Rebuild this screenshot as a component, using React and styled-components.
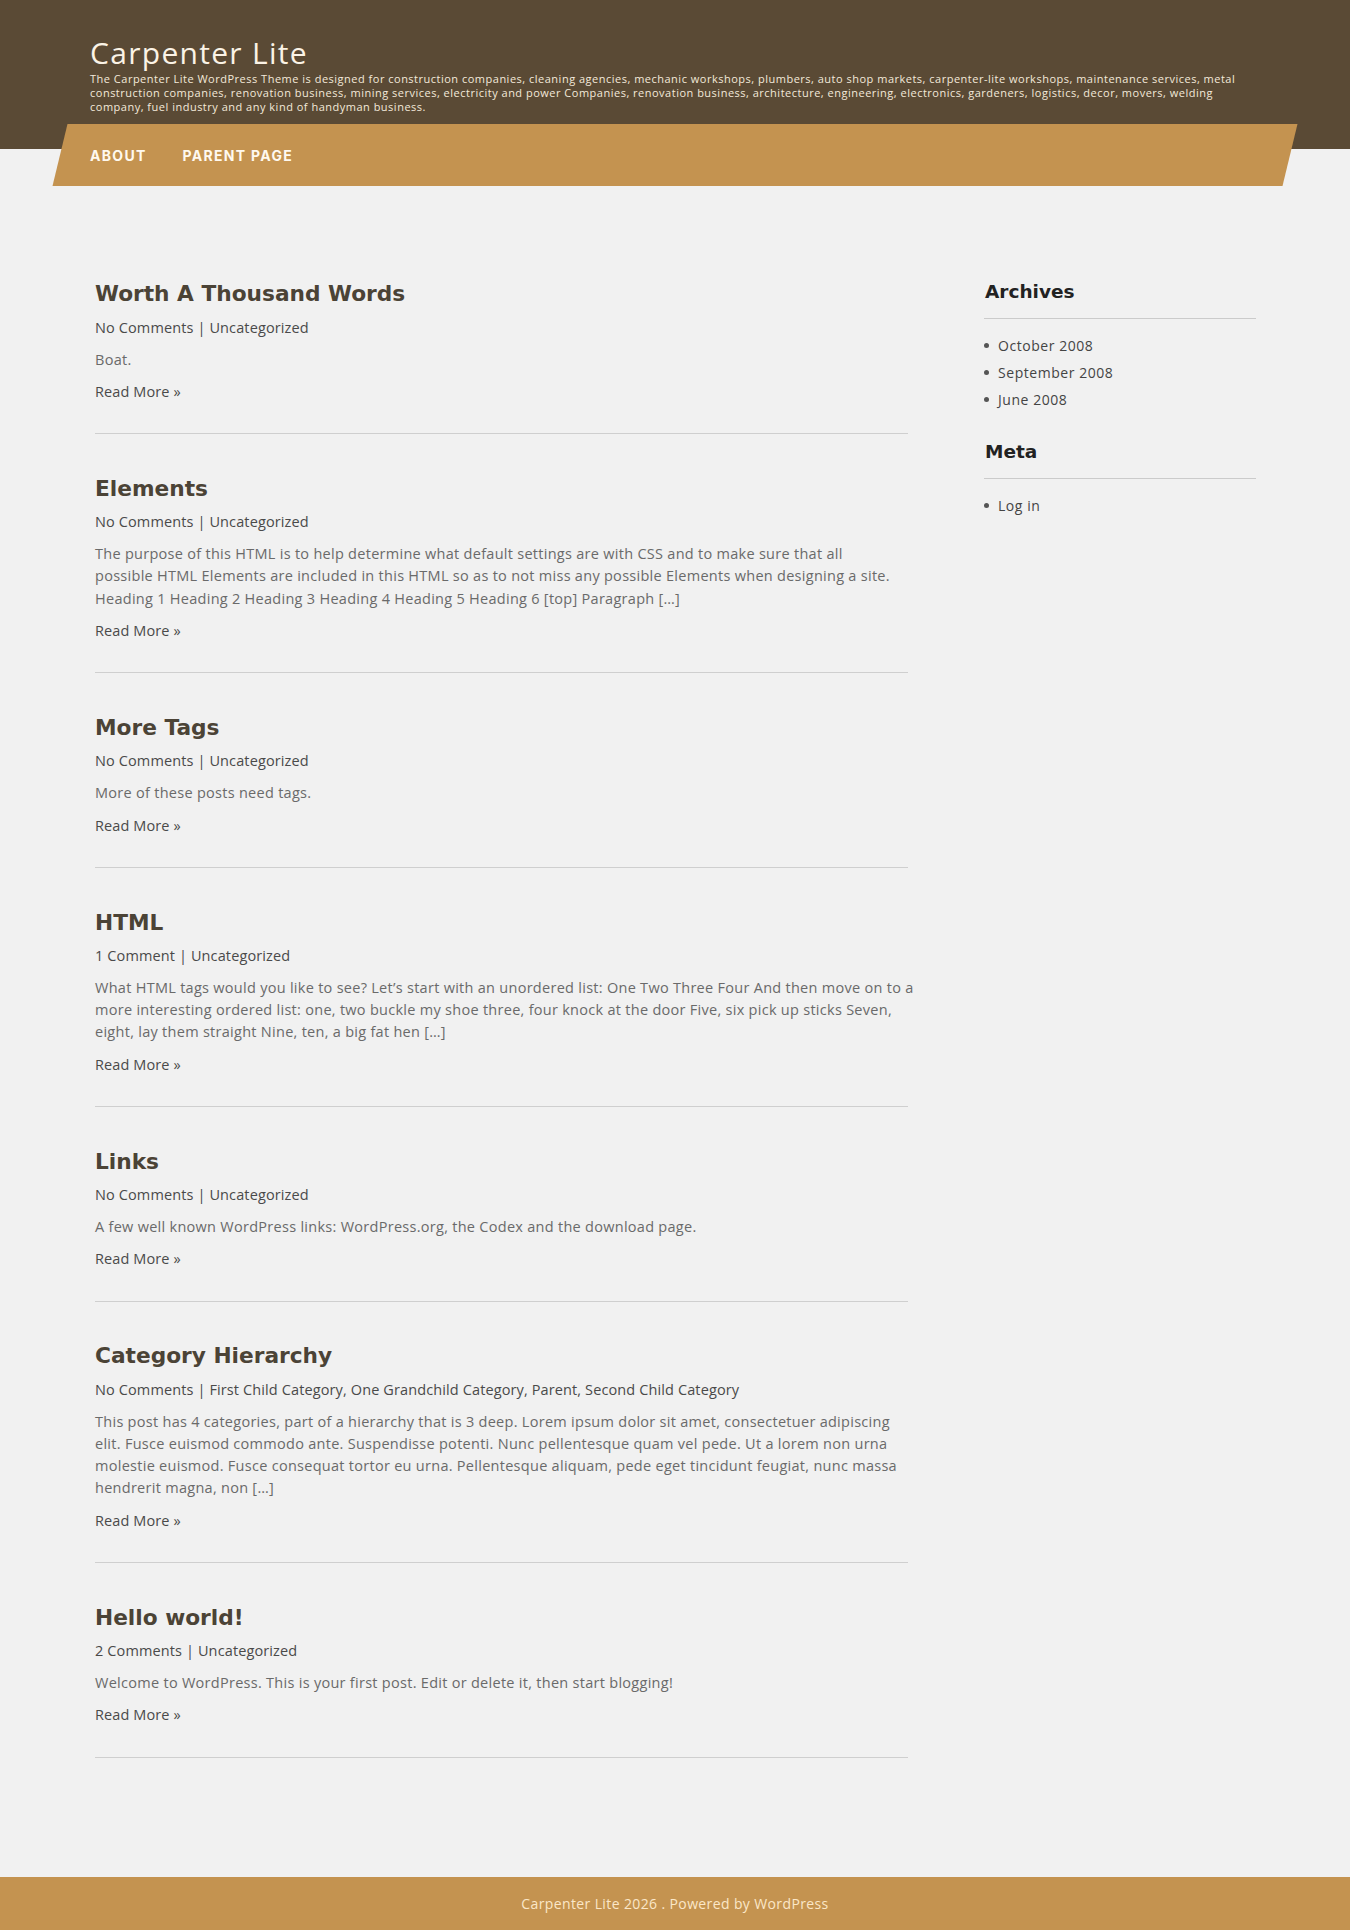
import React from "react";
import styled, { createGlobalStyle } from "styled-components";

const GlobalStyle = createGlobalStyle`
  html, body { margin: 0; padding: 0; }
  body {
    background: #f1f1f1;
    font-family: "Open Sans", "Liberation Sans", sans-serif;
    color: #4a4a4a;
  }
  * { box-sizing: border-box; }
  a { color: inherit; text-decoration: none; }
`;

const HeaderBand = styled.header`
  background: #5a4a35;
  height: 149px;
`;

const HeaderInner = styled.div`
  width: 1170px;
  margin: 0 auto;
  padding-top: 35px;
`;

const SiteTitle = styled.h1`
  margin: 0;
  font-family: "Open Sans", "Liberation Sans", sans-serif;
  font-weight: 400;
  font-size: 30px;
  line-height: 36px;
  letter-spacing: 1.3px;
  color: #fbf3e6;
`;

const Tagline = styled.p`
  margin: 0.5px 0 0;
  font-family: "Open Sans", "Liberation Sans", sans-serif;
  font-size: 11px;
  line-height: 14px;
  letter-spacing: 0.5px;
  color: #f3e9da;
  white-space: nowrap;
`;

const NavBar = styled.nav`
  position: relative;
  width: 1230px;
  height: 62px;
  margin: -25px auto 0;
  padding-left: 30px;
  display: flex;
  align-items: center;
  gap: 36px;
  &::before {
    content: "";
    position: absolute;
    inset: 0;
    background: #c49350;
    transform: skewX(-13.6deg);
    z-index: 0;
  }
`;

const NavLink = styled.a`
  position: relative;
  z-index: 1;
  font-family: "Inter", "Liberation Sans", sans-serif;
  font-weight: 700;
  font-size: 14px;
  letter-spacing: 1.3px;
  text-transform: uppercase;
  color: #fff9ef;
`;

const Content = styled.div`
  width: 1170px;
  margin: 0 auto;
  padding: 93px 4px 80px 5px;
  display: grid;
  grid-template-columns: 813px 272px;
  column-gap: 76px;
  align-items: start;
`;

const Main = styled.main``;

const Article = styled.article`
  padding-bottom: 30.5px;
  border-bottom: 1px solid #cfcfcf;
  margin-bottom: 39.5px;
`;

const PostTitle = styled.h2`
  margin: 0;
  font-family: "DejaVu Sans", "Liberation Sans", sans-serif;
  font-weight: 700;
  font-size: 21.7px;
  line-height: 29.5px;
  color: #4b4336;
`;

const Meta = styled.div`
  margin-top: 8px;
  font-size: 14.5px;
  line-height: 22px;
  letter-spacing: 0.12px;
  color: #4a4a4a;
`;

const Excerpt = styled.p`
  margin: 10px 0 0;
  font-size: 14.5px;
  line-height: 22.2px;
  letter-spacing: 0.28px;
  color: #6a6a6a;
  white-space: nowrap;
`;

const ReadMore = styled.a`
  display: block;
  margin-top: 10px;
  font-size: 14.5px;
  line-height: 22px;
  letter-spacing: 0.1px;
  color: #4a4a4a;
`;

const Sidebar = styled.aside``;

const Widget = styled.section`
  & + & { margin-top: 26px; }
`;

const WidgetTitle = styled.h3`
  margin: 0;
  padding: 0 0 13px 1px;
  border-bottom: 1px solid #cbcbcb;
  font-family: "DejaVu Sans", "Liberation Sans", sans-serif;
  font-weight: 700;
  font-size: 18.5px;
  line-height: 26px;
  color: #222;
`;

const WidgetList = styled.ul`
  list-style: none;
  margin: 13px 0 0;
  padding: 0;
`;

const WidgetItem = styled.li`
  display: flex;
  align-items: center;
  gap: 9px;
  font-size: 14px;
  line-height: 27px;
  letter-spacing: 0.55px;
  color: #444;
  &::before {
    content: "";
    width: 5px;
    height: 5px;
    border-radius: 50%;
    background: #555;
  }
`;

const Footer = styled.footer`
  height: 53px;
  background: #c49350;
  display: flex;
  align-items: center;
  justify-content: center;
  font-size: 14px;
  letter-spacing: 0.38px;
  color: #fbe7c8;
`;

const posts = [
  {
    title: "Worth A Thousand Words",
    meta: "No Comments | Uncategorized",
    lines: ["Boat."],
  },
  {
    title: "Elements",
    meta: "No Comments | Uncategorized",
    lines: [
      "The purpose of this HTML is to help determine what default settings are with CSS and to make sure that all",
      "possible HTML Elements are included in this HTML so as to not miss any possible Elements when designing a site.",
      "Heading 1 Heading 2 Heading 3 Heading 4 Heading 5 Heading 6 [top] Paragraph […]",
    ],
  },
  {
    title: "More Tags",
    meta: "No Comments | Uncategorized",
    lines: ["More of these posts need tags."],
  },
  {
    title: "HTML",
    meta: "1 Comment | Uncategorized",
    lines: [
      "What HTML tags would you like to see? Let’s start with an unordered list: One Two Three Four And then move on to a",
      "more interesting ordered list: one, two buckle my shoe three, four knock at the door Five, six pick up sticks Seven,",
      "eight, lay them straight Nine, ten, a big fat hen […]",
    ],
  },
  {
    title: "Links",
    meta: "No Comments | Uncategorized",
    lines: ["A few well known WordPress links: WordPress.org, the Codex and the download page."],
  },
  {
    title: "Category Hierarchy",
    meta: "No Comments | First Child Category, One Grandchild Category, Parent, Second Child Category",
    lines: [
      "This post has 4 categories, part of a hierarchy that is 3 deep. Lorem ipsum dolor sit amet, consectetuer adipiscing",
      "elit. Fusce euismod commodo ante. Suspendisse potenti. Nunc pellentesque quam vel pede. Ut a lorem non urna",
      "molestie euismod. Fusce consequat tortor eu urna. Pellentesque aliquam, pede eget tincidunt feugiat, nunc massa",
      "hendrerit magna, non […]",
    ],
  },
  {
    title: "Hello world!",
    meta: "2 Comments | Uncategorized",
    lines: ["Welcome to WordPress. This is your first post. Edit or delete it, then start blogging!"],
  },
];

export default function App() {
  return (
    <>
      <GlobalStyle />
      <HeaderBand>
        <HeaderInner>
          <SiteTitle>Carpenter Lite</SiteTitle>
          <Tagline>
            The Carpenter Lite WordPress Theme is designed for construction companies, cleaning agencies, mechanic
            workshops, plumbers, auto shop markets, carpenter-lite workshops, maintenance services, metal
            <br />
            construction companies, renovation business, mining services, electricity and power Companies, renovation
            business, architecture, engineering, electronics, gardeners, logistics, decor, movers, welding
            <br />
            company, fuel industry and any kind of handyman business.
          </Tagline>
        </HeaderInner>
      </HeaderBand>
      <NavBar>
        <NavLink href="#">About</NavLink>
        <NavLink href="#">Parent Page</NavLink>
      </NavBar>
      <Content>
        <Main>
          {posts.map((p) => (
            <Article key={p.title}>
              <PostTitle>{p.title}</PostTitle>
              <Meta>{p.meta}</Meta>
              <Excerpt>
                {p.lines.map((l, i) => (
                  <React.Fragment key={i}>
                    {i > 0 && <br />}
                    {l}
                  </React.Fragment>
                ))}
              </Excerpt>
              <ReadMore href="#">Read More »</ReadMore>
            </Article>
          ))}
        </Main>
        <Sidebar>
          <Widget>
            <WidgetTitle>Archives</WidgetTitle>
            <WidgetList>
              <WidgetItem>October 2008</WidgetItem>
              <WidgetItem>September 2008</WidgetItem>
              <WidgetItem>June 2008</WidgetItem>
            </WidgetList>
          </Widget>
          <Widget>
            <WidgetTitle>Meta</WidgetTitle>
            <WidgetList>
              <WidgetItem>Log in</WidgetItem>
            </WidgetList>
          </Widget>
        </Sidebar>
      </Content>
      <Footer>Carpenter Lite 2026 . Powered by WordPress</Footer>
    </>
  );
}
